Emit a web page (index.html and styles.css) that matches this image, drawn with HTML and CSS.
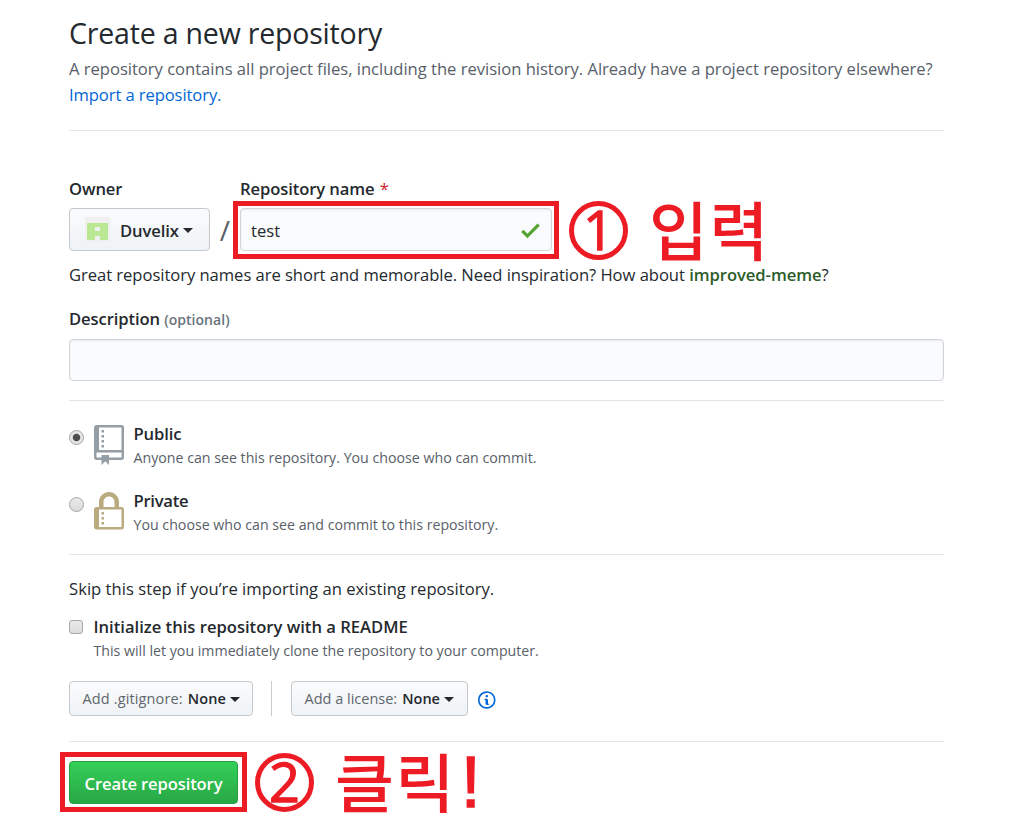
FILE: index.html
```html
<!DOCTYPE html>
<html lang="en">
<head>
<meta charset="utf-8">
<title>Create a new repository</title>
<link rel="stylesheet" href="styles.css">
</head>
<body>
<main class="page">
  <header class="head">
    <h1 class="title">Create a new repository</h1>
    <p class="lead"><span class="t-lead">A repository contains all project files, including the revision history. Already have a project repository elsewhere?</span><br><a class="link" href="#">Import a repository.</a></p>
  </header>

  <form class="form">
    <section class="naming">
      <div class="fields">
        <div class="owner">
          <span class="label">Owner</span>
          <button type="button" class="btn owner-btn">
            <svg class="avatar" viewBox="0 0 25 25"><rect width="25" height="25" fill="#f0f0f0"/><path fill="#bbe993" d="M2 6h21v17h-8v-4h-5v4H2z"/><path fill="#f0f0f0" d="M10 10h5v4h-5z"/></svg>
            <span class="owner-name">Duvelix</span><i class="caret"></i>
          </button>
        </div>
        <span class="slash">/</span>
        <div class="repo">
          <span class="label">Repository name <b class="star">*</b></span>
          <div class="input name-input"><span class="value">test</span>
            <svg class="check" viewBox="0 0 12 16"><path fill="#55a532" d="M12 5l-8 8-4-4 1.5-1.5L4 10l6.5-6.5z"/></svg>
          </div>
        </div>
      </div>
      <p class="hint">Great repository names are short and memorable. Need inspiration? How about <strong class="suggest">improved-meme</strong>?</p>
      <div class="label desc-label">Description <span class="optional">(optional)</span></div>
      <div class="input desc-input"></div>
    </section>

    <section class="visibility">
      <div class="choice">
        <i class="radio checked"></i>
        <svg class="kind" viewBox="0 0 12 16"><path fill="#959da5" fill-rule="evenodd" d="M4 9H3V8h1v1zm0-3H3v1h1V6zm0-2H3v1h1V4zm0-2H3v1h1V2zm8-1v12c0 .55-.45 1-1 1H6v2l-1.5-1.5L3 16v-2H1c-.55 0-1-.45-1-1V1c0-.55.45-1 1-1h10c.55 0 1 .45 1 1zm-1 10H1v2h2v-1h3v1h5v-2zm0-10H2v9h9V1z"/></svg>
        <div><div class="label">Public</div><p class="note">Anyone can see this repository. You choose who can commit.</p></div>
      </div>
      <div class="choice">
        <i class="radio"></i>
        <svg class="kind" viewBox="0 0 12 16"><path fill="#b9ab7f" fill-rule="evenodd" d="M4 13H3v-1h1v1zm8-6v7c0 .55-.45 1-1 1H1c-.55 0-1-.45-1-1V7c0-.55.45-1 1-1h1V4c0-2.200 1.800-4 4-4s4 1.800 4 4v2h1c.55 0 1 .45 1 1zM3.800 6h4.410V4c0-1.220-.98-2.200-2.200-2.200-1.220 0-2.200.98-2.200 2.200v2H3.800zM11 7H2v7h9V7zM4 8H3v1h1V8zm0 2H3v1h1v-1z"/></svg>
        <div><div class="label private">Private</div><p class="note">You choose who can see and commit to this repository.</p></div>
      </div>
    </section>

    <section class="setup">
      <p class="skip">Skip this step if you’re importing an existing repository.</p>
      <div class="init">
        <i class="checkbox"></i>
        <div><div class="label init-label">Initialize this repository with a README</div><p class="note">This will let you immediately clone the repository to your computer.</p></div>
      </div>
      <div class="extras">
        <button type="button" class="btn small gitignore"><span>Add .gitignore:</span> <b>None</b><i class="caret"></i></button>
        <i class="divider"></i>
        <button type="button" class="btn small license"><span>Add a license:</span> <b>None</b><i class="caret"></i></button>
        <svg class="info" viewBox="0 0 14 16"><path fill="#0366d6" fill-rule="evenodd" d="M6.300 5.690a.942.942 0 0 1-.28-.7c0-.28.09-.52.28-.7.19-.18.42-.28.7-.28.28 0 .52.09.7.28.18.19.28.42.28.7 0 .28-.09.52-.28.7a1 1 0 0 1-.7.3c-.28 0-.52-.11-.7-.3zM8 7.990c-.02-.25-.11-.48-.31-.69-.2-.19-.42-.3-.69-.31H6c-.27.02-.48.13-.69.31-.2.2-.3.44-.31.69h1v3c.02.27.11.5.31.69.2.2.42.31.69.31h1c.27 0 .48-.11.69-.31.2-.19.3-.42.31-.69H8V7.980v.01zM7 2.300c-3.140 0-5.700 2.540-5.700 5.680 0 3.140 2.560 5.700 5.700 5.700s5.700-2.550 5.700-5.700c0-3.150-2.560-5.690-5.700-5.690v.01zM7 .98c3.860 0 7 3.140 7 7s-3.140 7-7 7-7-3.120-7-7 3.140-7 7-7z"/></svg>
      </div>
    </section>

    <button type="button" class="submit">Create repository</button>
  </form>
</main>

<div class="frame frame-name"></div>
<div class="frame frame-submit"></div>
<div class="step step-one"><span class="num">1</span><span class="ko">입력</span></div>
<div class="step step-two"><span class="num">2</span><span class="ko">클릭<span class="bang">!</span></span></div>
</body>
</html>
```
FILE: styles.css
```css
* { box-sizing: border-box; }
body {
  margin: 0;
  position: relative;
  width: 1015px;
  height: 834px;
  overflow: hidden;
  background: #fff;
  color: #24292e;
  font: 16.6px/26px "Open Sans", "Noto Sans", sans-serif;
}
p, h1 { margin: 0; white-space: nowrap; }
button { font: inherit; color: inherit; }
.page { margin-left: 69px; width: 875px; padding-top: 13px; }
.head { height: 118px; border-bottom: 1px solid #e1e4e8; }
.title { font-size: 28.5px; font-weight: 400; line-height: 41px; height: 43px; letter-spacing: -.19px; }
.lead { color: #586069; letter-spacing: -.02px; }
.link { color: #0366d6; text-decoration: none; letter-spacing: -.1px; }
.label { font-weight: 600; white-space: nowrap; display: block; letter-spacing: -.1px; }

.naming { height: 270px; padding-top: 45px; border-bottom: 1px solid #e1e4e8; }
.fields { display: flex; align-items: flex-end; }
.owner { width: 141px; }
.btn {
  display: flex;
  align-items: center;
  border: 1px solid #c5c9cd;
  border-radius: 4px;
  background: linear-gradient(#fafbfc, #eff3f6);
  padding: 0;
  white-space: nowrap;
}
.owner-btn { width: 141px; height: 43px; margin-top: 6px; padding-left: 15px; font-weight: 600; letter-spacing: -.1px; }
.avatar { width: 25px; height: 25px; margin-right: 10px; }
.owner-name, .value { padding-top: 2px; }
.caret { border: 5px solid transparent; border-top-color: #24292e; border-bottom: 0; margin: 1px 0 0 4px; }
.slash { width: 30px; height: 43px; text-align: center; font-size: 28px; line-height: 45px; color: #586069; }
.star { color: #cb2431; font-weight: 400; margin-left: 1px; }
.input {
  border: 1px solid #d1d5da;
  border-radius: 4px;
  background: #fafbfc;
  box-shadow: inset 0 1px 2px rgba(27, 31, 35, .075);
}
.name-input { width: 312px; height: 43px; margin-top: 6px; padding: 0 11px 0 10px; display: flex; align-items: center; justify-content: space-between; }
.check { width: 19px; height: 25px; margin-top: 1px; }
.hint { margin-top: 11px; letter-spacing: -.045px; }
.suggest { color: #2c5d2a; font-weight: 600; }
.desc-label { margin-top: 18px; }
.optional { font-size: 14px; color: #6a737d; letter-spacing: .05px; }
.desc-input { height: 42px; margin-top: 6px; }

.visibility { height: 154px; padding-top: 20px; border-bottom: 1px solid #e1e4e8; }
.choice { display: flex; height: 67px; }
.radio { width: 15px; height: 15px; margin: 9px 10px 0 0; border: 1px solid #a5a5a5; border-radius: 50%; background: linear-gradient(#e9e9e9, #dcdcdc); }
.checked { background: radial-gradient(circle, #4d4d4d 3.3px, #e5e5e5 4.2px); }
.kind { width: 30px; height: 40px; margin: 4px 9.5px 0 0; }
.private { letter-spacing: -.25px; }
.note { font-size: 14.2px; line-height: 22px; color: #586069; }

.setup { height: 187px; padding-top: 21px; border-bottom: 1px solid #e1e4e8; }
.skip { letter-spacing: .03px; }
.init { display: flex; margin-top: 12px; height: 67px; }
.init-label { letter-spacing: 0; }
.checkbox { width: 14px; height: 14px; margin: 6px 10.5px 0 0; border: 1px solid #a9a9a9; border-radius: 3px; background: linear-gradient(#e9e9e9, #dcdcdc); }
.extras { display: flex; align-items: center; }
.small { height: 35px; padding-left: 12.5px; font-size: 14.5px; color: #24292e; }
.small span { color: #5f666d; font-weight: 500; margin-right: 5px; }
.small b { font-weight: 600; }
.small .caret { margin-left: 4px; }
.gitignore { width: 184px; letter-spacing: .13px; }
.license { width: 177px; }
.divider { width: 1px; height: 35px; background: #c9cdd1; margin: 0 19px 0 18px; }
.info { width: 17.5px; height: 20px; margin: 2px 0 0 10px; }
.submit {
  display: block;
  width: 169px;
  height: 43px;
  margin-top: 19px;
  padding: 2px 0 0;
  border: 1px solid #279f43;
  border-radius: 4px;
  background: linear-gradient(#34d058, #28a745);
  color: #fff;
  font-weight: 600;
  letter-spacing: -.12px;
  white-space: nowrap;
}

/* Tutorial markup laid over the form */
.frame { position: absolute; border: 5px solid #ed1c24; }
.frame-name { left: 233px; top: 201px; width: 326px; height: 58px; }
.frame-submit { left: 60px; top: 752px; width: 187px; height: 60px; }
.step { position: absolute; display: flex; color: #ed1c24; }
.step-one { left: 569px; top: 201px; }
.step-two { left: 255px; top: 753px; }
.num { width: 59px; height: 59px; border: 5px solid; border-radius: 50%; text-align: center; font-size: 54px; line-height: 47px; -webkit-text-stroke: 1.3px #ed1c24; }
.ko { height: 59px; margin-left: 21px; font: 500 64px/52px "Noto Sans CJK KR", sans-serif; letter-spacing: 1.5px; white-space: nowrap; }
.bang { margin-left: 5px; font: 400 72px/51px "Liberation Sans", sans-serif; -webkit-text-stroke: 1.3px #ed1c24; }
```
